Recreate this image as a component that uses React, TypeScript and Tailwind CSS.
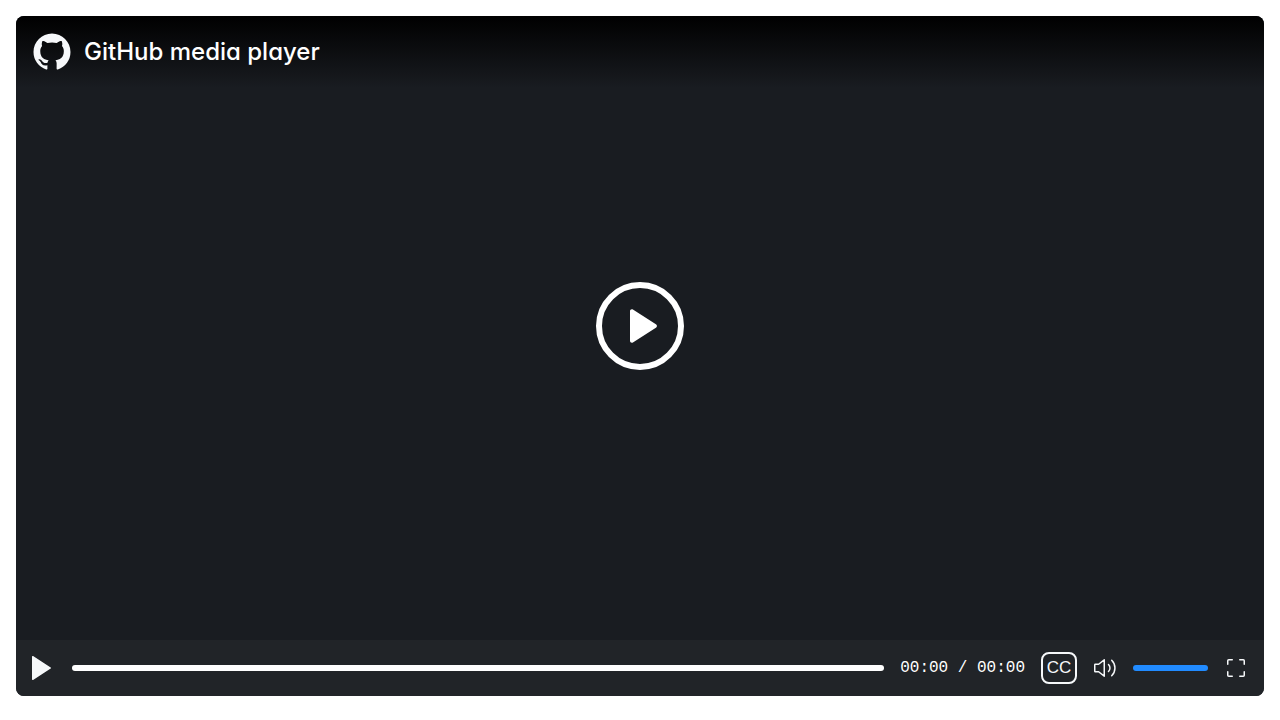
import { useState } from "react";

function GitHubMark() {
  return (
    <svg viewBox="-0.65 -0.65 17.3 17.3" className="size-10" fill="currentColor" aria-hidden="true">
      <path d="M8 0c4.42 0 8 3.58 8 8a8.013 8.013 0 0 1-5.45 7.59c-.4.08-.55-.17-.55-.38 0-.27.01-1.13.01-2.2 0-.75-.25-1.23-.54-1.48 1.78-.2 3.65-.88 3.65-3.95 0-.88-.31-1.59-.82-2.15.08-.2.36-1.02-.08-2.12 0 0-.67-.22-2.2.82-.64-.18-1.32-.27-2-.27-.68 0-1.36.09-2 .27-1.53-1.03-2.2-.82-2.2-.82-.44 1.1-.16 1.92-.08 2.12-.51.56-.82 1.28-.82 2.15 0 3.06 1.86 3.75 3.64 3.95-.23.2-.44.55-.51 1.07-.46.21-1.61.55-2.33-.66-.15-.24-.6-.83-1.23-.82-.67.01-.27.38.01.53.34.19.73.9.82 1.13.16.45.68 1.31 2.69.94 0 .67.01 1.3.01 1.49 0 .21-.15.45-.55.38A7.995 7.995 0 0 1 0 8c0-4.42 3.58-8 8-8Z" />
    </svg>
  );
}

function SoundIcon() {
  return (
    <svg viewBox="0 0 24 24" className="size-6" fill="none" stroke="currentColor" strokeWidth="1.5" aria-hidden="true">
      <path d="M11.25 3.8v16.4L5.6 15.75H2.25a.5.5 0 0 1-.5-.5v-6.5a.5.5 0 0 1 .5-.5H5.6Z" strokeLinejoin="round" />
      <path d="M15.5 8.45a5 5 0 0 1 0 7.1M18.7 4.2a11 11 0 0 1 0 15.6" strokeLinecap="round" />
    </svg>
  );
}

function FullscreenIcon() {
  return (
    <svg viewBox="0 0 24 24" className="size-6" fill="none" stroke="currentColor" strokeWidth="1.5" strokeLinecap="round" aria-hidden="true">
      <path d="M3.75 8.25v-3.5a1 1 0 0 1 1-1h3.5M15.75 3.75h3.5a1 1 0 0 1 1 1v3.5M20.25 15.75v3.5a1 1 0 0 1-1 1h-3.5M8.25 20.25h-3.5a1 1 0 0 1-1-1v-3.5" />
    </svg>
  );
}

const slider =
  "block h-1.5 cursor-pointer appearance-none rounded-[3px] [&::-webkit-slider-thumb]:size-0 [&::-webkit-slider-thumb]:appearance-none";

export default function App() {
  const [position, setPosition] = useState(0);
  const [volume, setVolume] = useState(100);

  return (
    <main className="flex min-h-screen flex-col bg-white px-4 pt-4 pb-6">
      <section aria-label="Media player" className="flex grow flex-col overflow-hidden rounded-lg bg-[#191c21] text-[#f6f8fa]">
        <header className="flex h-18 shrink-0 items-center gap-3 bg-linear-to-b/srgb from-black to-[#191c21] px-4">
          <GitHubMark />
          <h1 className="font-['Inter',sans-serif] text-2xl leading-8 font-medium text-white [font-feature-settings:'cv11']">
            GitHub media player
          </h1>
        </header>
        <div className="flex grow items-center justify-center pb-19">
          <button type="button" aria-label="Play video" className="flex size-22 items-center justify-center rounded-full border-6 border-white text-white">
            <svg viewBox="0 0 76 76" className="size-19" fill="currentColor" aria-hidden="true">
              <path d="M28 23.2v29.6c0 1.6 1.6 2.4 2.9 1.6l23-14.6c1.4-.9 1.4-2.7 0-3.6l-23-14.6c-1.3-.8-2.9 0-2.9 1.6Z" />
            </svg>
          </button>
        </div>
        <div className="flex h-14 shrink-0 items-center gap-4 bg-[#212428] px-4">
          <button type="button" aria-label="Play" className="shrink-0">
            <svg viewBox="0 0 24 24" className="size-6" fill="currentColor" aria-hidden="true">
              <path d="M0 .7v22.6c0 .6.6.9 1.1.6l17.6-11.3c.5-.3.5-.9 0-1.2L1.1.1C.6-.2 0 .1 0 .7Z" />
            </svg>
          </button>
          <input
            type="range"
            aria-label="Seek"
            min={0}
            max={100}
            value={position}
            onChange={(e) => setPosition(Number(e.target.value))}
            className={slider + " min-w-0 grow bg-white"}
          />
          <p className="shrink-0 font-['Liberation_Mono',monospace] text-base leading-6 text-white">00:00 / 00:00</p>
          <button
            type="button"
            aria-label="Closed captions"
            className="flex h-8 w-9 shrink-0 items-center justify-center rounded-lg border-2 border-[#f6f8fa] font-['Liberation_Sans',sans-serif] text-[17px] leading-6"
          >
            CC
          </button>
          <button type="button" aria-label="Mute" className="shrink-0">
            <SoundIcon />
          </button>
          <input
            type="range"
            aria-label="Volume"
            min={0}
            max={100}
            value={volume}
            onChange={(e) => setVolume(Number(e.target.value))}
            className={slider + " w-[75px] shrink-0 bg-[#218bff]"}
          />
          <button type="button" aria-label="Full screen" className="shrink-0">
            <FullscreenIcon />
          </button>
        </div>
      </section>
    </main>
  );
}
